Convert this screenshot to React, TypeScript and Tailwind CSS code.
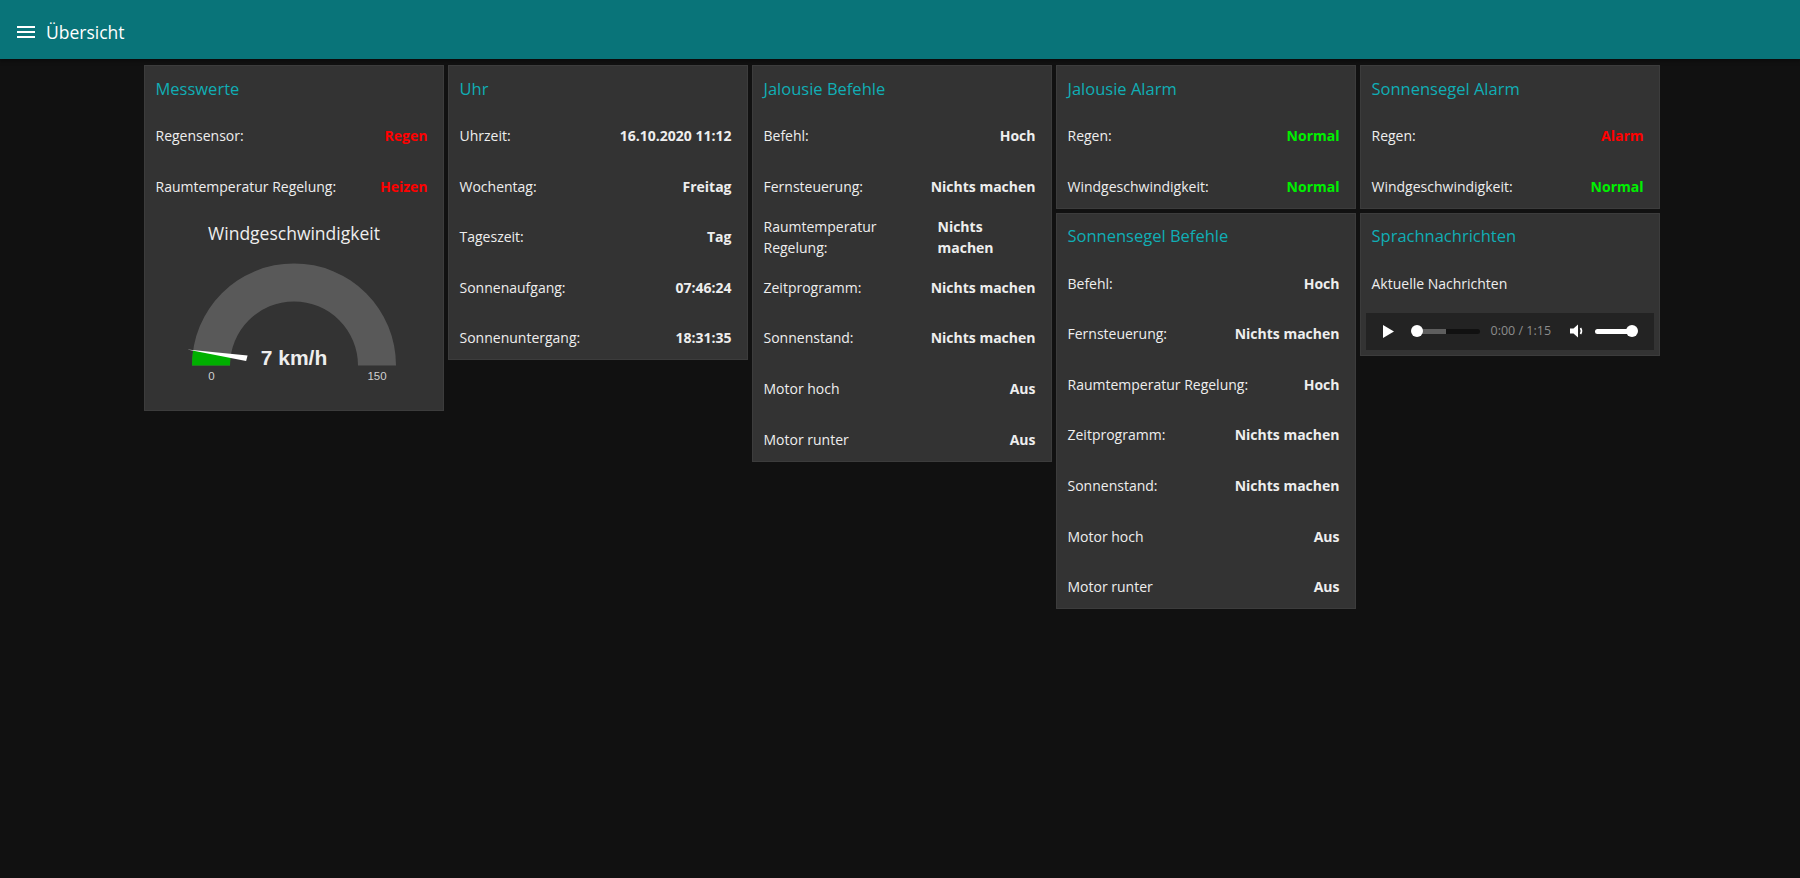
import React from "react";

type RowData = { label: React.ReactNode; value: React.ReactNode; color?: string; valueClass?: string; labelClass?: string };

function Row({ label, value, color, valueClass, labelClass }: RowData) {
  return (
    <div className="flex h-[43px] items-center justify-between text-[14px] text-[#eeeeee]">
      <div className={labelClass ?? "whitespace-nowrap"}>{label}</div>
      <div className={(valueClass ?? "whitespace-nowrap text-right") + " font-bold"} style={color ? { color } : undefined}>
        {value}
      </div>
    </div>
  );
}

function Card({ title, children, extra }: { title: string; children?: React.ReactNode; extra?: React.ReactNode }) {
  return (
    <div className="w-[300px] border border-[#3c3c3c] bg-[#333333]">
      <div className="flex h-[48px] items-center pb-[2px] pl-[11px] text-[16.5px] text-[#10aeb5]">{title}</div>
      <div className="flex flex-col gap-[7.6px] pl-[11px] pr-[15px]">{children}</div>
      {extra}
    </div>
  );
}

function Gauge() {
  const cx = 149;
  const cy = 157.4;
  return (
    <svg width="298" height="202" viewBox="0 0 298 202" className="block">
      <text x={cx} y={25.4} textAnchor="middle" dominantBaseline="central" fill="#eeeeee" fontSize="17.5" fontFamily="'Open Sans', sans-serif">
        Windgeschwindigkeit
      </text>
      <path d={`M ${cx - 102} ${cy} A 102 102 0 0 1 ${cx + 102} ${cy} L ${cx + 64} ${cy} A 64 64 0 0 0 ${cx - 64} ${cy} Z`} fill="#595959" />
      <path d={`M ${cx - 102} ${cy} A 102 102 0 0 1 ${cx - 100.9} ${cy - 14.9} L ${cx - 63.3} ${cy - 9.35} A 64 64 0 0 0 ${cx - 64} ${cy} Z`} fill="#00b000" />
      <polygon points={`${cx - 106.8},${cy - 15.8} ${cx - 47.9},${cy - 4.3} ${cx - 46.4},${cy - 9.8}`} fill="#ffffff" />
      <text x={cx} y={cy - 8} textAnchor="middle" dominantBaseline="central" fill="#eeeeee" fontSize="21" fontWeight="bold" fontFamily="'Liberation Sans', Arial, sans-serif">
        7 km/h
      </text>
      <text x={cx - 82.5} y={cy + 10.5} textAnchor="middle" dominantBaseline="central" fill="#d0d0d0" fontSize="11.5" fontFamily="'Liberation Sans', Arial, sans-serif">
        0
      </text>
      <text x={cx + 83} y={cy + 10.5} textAnchor="middle" dominantBaseline="central" fill="#d0d0d0" fontSize="11.5" fontFamily="'Liberation Sans', Arial, sans-serif">
        150
      </text>
    </svg>
  );
}

function AudioPlayer() {
  return (
    <div className="mx-[5px] mb-[5px] mt-[8px] flex h-[37px] items-center bg-[#232323]">
      <svg width="11" height="13" viewBox="0 0 11 13" className="ml-[17px] shrink-0">
        <path d="M0 0 L11 6.5 L0 13 Z" fill="#ffffff" />
      </svg>
      <div className="relative ml-[17px] h-[12px] w-[69px] shrink-0">
        <div className="absolute left-[6px] top-[3.5px] h-[5px] w-[63px] rounded-full bg-[#111111]" />
        <div className="absolute left-[6px] top-[3.5px] h-[5px] w-[29px] rounded-l-full bg-[#5e5e5e]" />
        <div className="absolute left-0 top-0 h-[12px] w-[12px] rounded-full bg-[#ffffff]" />
      </div>
      <div className="ml-[11px] whitespace-nowrap text-[12.5px] text-[#8c8c8c]">0:00 / 1:15</div>
      <svg width="16" height="14" viewBox="0 0 16 14" className="ml-[19px] shrink-0">
        <path d="M0 4.5 H3.5 L8 0.5 V13.5 L3.5 9.5 H0 Z" fill="#ffffff" />
        <path d="M10.5 4 Q12.5 7 10.5 10" stroke="#ffffff" strokeWidth="1.6" fill="none" />
      </svg>
      <div className="relative ml-[9px] h-[12px] w-[43px] shrink-0">
        <div className="absolute left-0 top-[3.5px] h-[5px] w-[38px] rounded-full bg-[#ffffff]" />
        <div className="absolute right-0 top-0 h-[12px] w-[12px] rounded-full bg-[#ffffff]" />
      </div>
    </div>
  );
}

export default function App() {
  const red = "#ff0000";
  const green = "#00f000";
  return (
    <div className="min-h-screen bg-[#111111]" style={{ fontFamily: "'Open Sans', 'Noto Sans', sans-serif" }}>
      <div className="flex h-[59px] items-center bg-[#097479] pl-[17px] pt-[5px] shadow-[0_2px_4px_rgba(0,0,0,0.4)]">
        <svg width="18" height="12" viewBox="0 0 18 12" className="shrink-0">
          <rect x="0" y="0" width="18" height="2" fill="#ffffff" />
          <rect x="0" y="5" width="18" height="2" fill="#ffffff" />
          <rect x="0" y="10" width="18" height="2" fill="#ffffff" />
        </svg>
        <div className="ml-[11px] text-[17.5px] text-[#ffffff]">Übersicht</div>
      </div>

      <div className="flex items-start justify-center gap-[4px] pl-[3px] pt-[6px]">
        <div className="flex w-[300px] flex-col gap-[4px]">
          <Card title="Messwerte" extra={<Gauge />}>
            <Row label="Regensensor:" value="Regen" color={red} />
            <Row label="Raumtemperatur Regelung:" value="Heizen" color={red} />
          </Card>
        </div>

        <div className="flex w-[300px] flex-col gap-[4px]">
          <Card title="Uhr">
            <Row label="Uhrzeit:" value="16.10.2020 11:12" />
            <Row label="Wochentag:" value="Freitag" />
            <Row label="Tageszeit:" value="Tag" />
            <Row label="Sonnenaufgang:" value="07:46:24" />
            <Row label="Sonnenuntergang:" value="18:31:35" />
          </Card>
        </div>

        <div className="flex w-[300px] flex-col gap-[4px]">
          <Card title="Jalousie Befehle">
            <Row label="Befehl:" value="Hoch" />
            <Row label="Fernsteuerung:" value="Nichts machen" />
            <Row
              label={
                <>
                  Raumtemperatur
                  <br />
                  Regelung:
                </>
              }
              labelClass="leading-[21px]"
              value={
                <>
                  Nichts
                  <br />
                  machen
                </>
              }
              valueClass="w-[98px] text-left leading-[21px]"
            />
            <Row label="Zeitprogramm:" value="Nichts machen" />
            <Row label="Sonnenstand:" value="Nichts machen" />
            <Row label="Motor hoch" value="Aus" />
            <Row label="Motor runter" value="Aus" />
          </Card>
        </div>

        <div className="flex w-[300px] flex-col gap-[4px]">
          <Card title="Jalousie Alarm">
            <Row label="Regen:" value="Normal" color={green} />
            <Row label="Windgeschwindigkeit:" value="Normal" color={green} />
          </Card>
          <Card title="Sonnensegel Befehle">
            <Row label="Befehl:" value="Hoch" />
            <Row label="Fernsteuerung:" value="Nichts machen" />
            <Row label="Raumtemperatur Regelung:" value="Hoch" />
            <Row label="Zeitprogramm:" value="Nichts machen" />
            <Row label="Sonnenstand:" value="Nichts machen" />
            <Row label="Motor hoch" value="Aus" />
            <Row label="Motor runter" value="Aus" />
          </Card>
        </div>

        <div className="flex w-[300px] flex-col gap-[4px]">
          <Card title="Sonnensegel Alarm">
            <Row label="Regen:" value="Alarm" color={red} />
            <Row label="Windgeschwindigkeit:" value="Normal" color={green} />
          </Card>
          <Card title="Sprachnachrichten" extra={<AudioPlayer />}>
            <div className="flex h-[43px] items-center text-[14px] text-[#eeeeee]">Aktuelle Nachrichten</div>
          </Card>
        </div>
      </div>
    </div>
  );
}
